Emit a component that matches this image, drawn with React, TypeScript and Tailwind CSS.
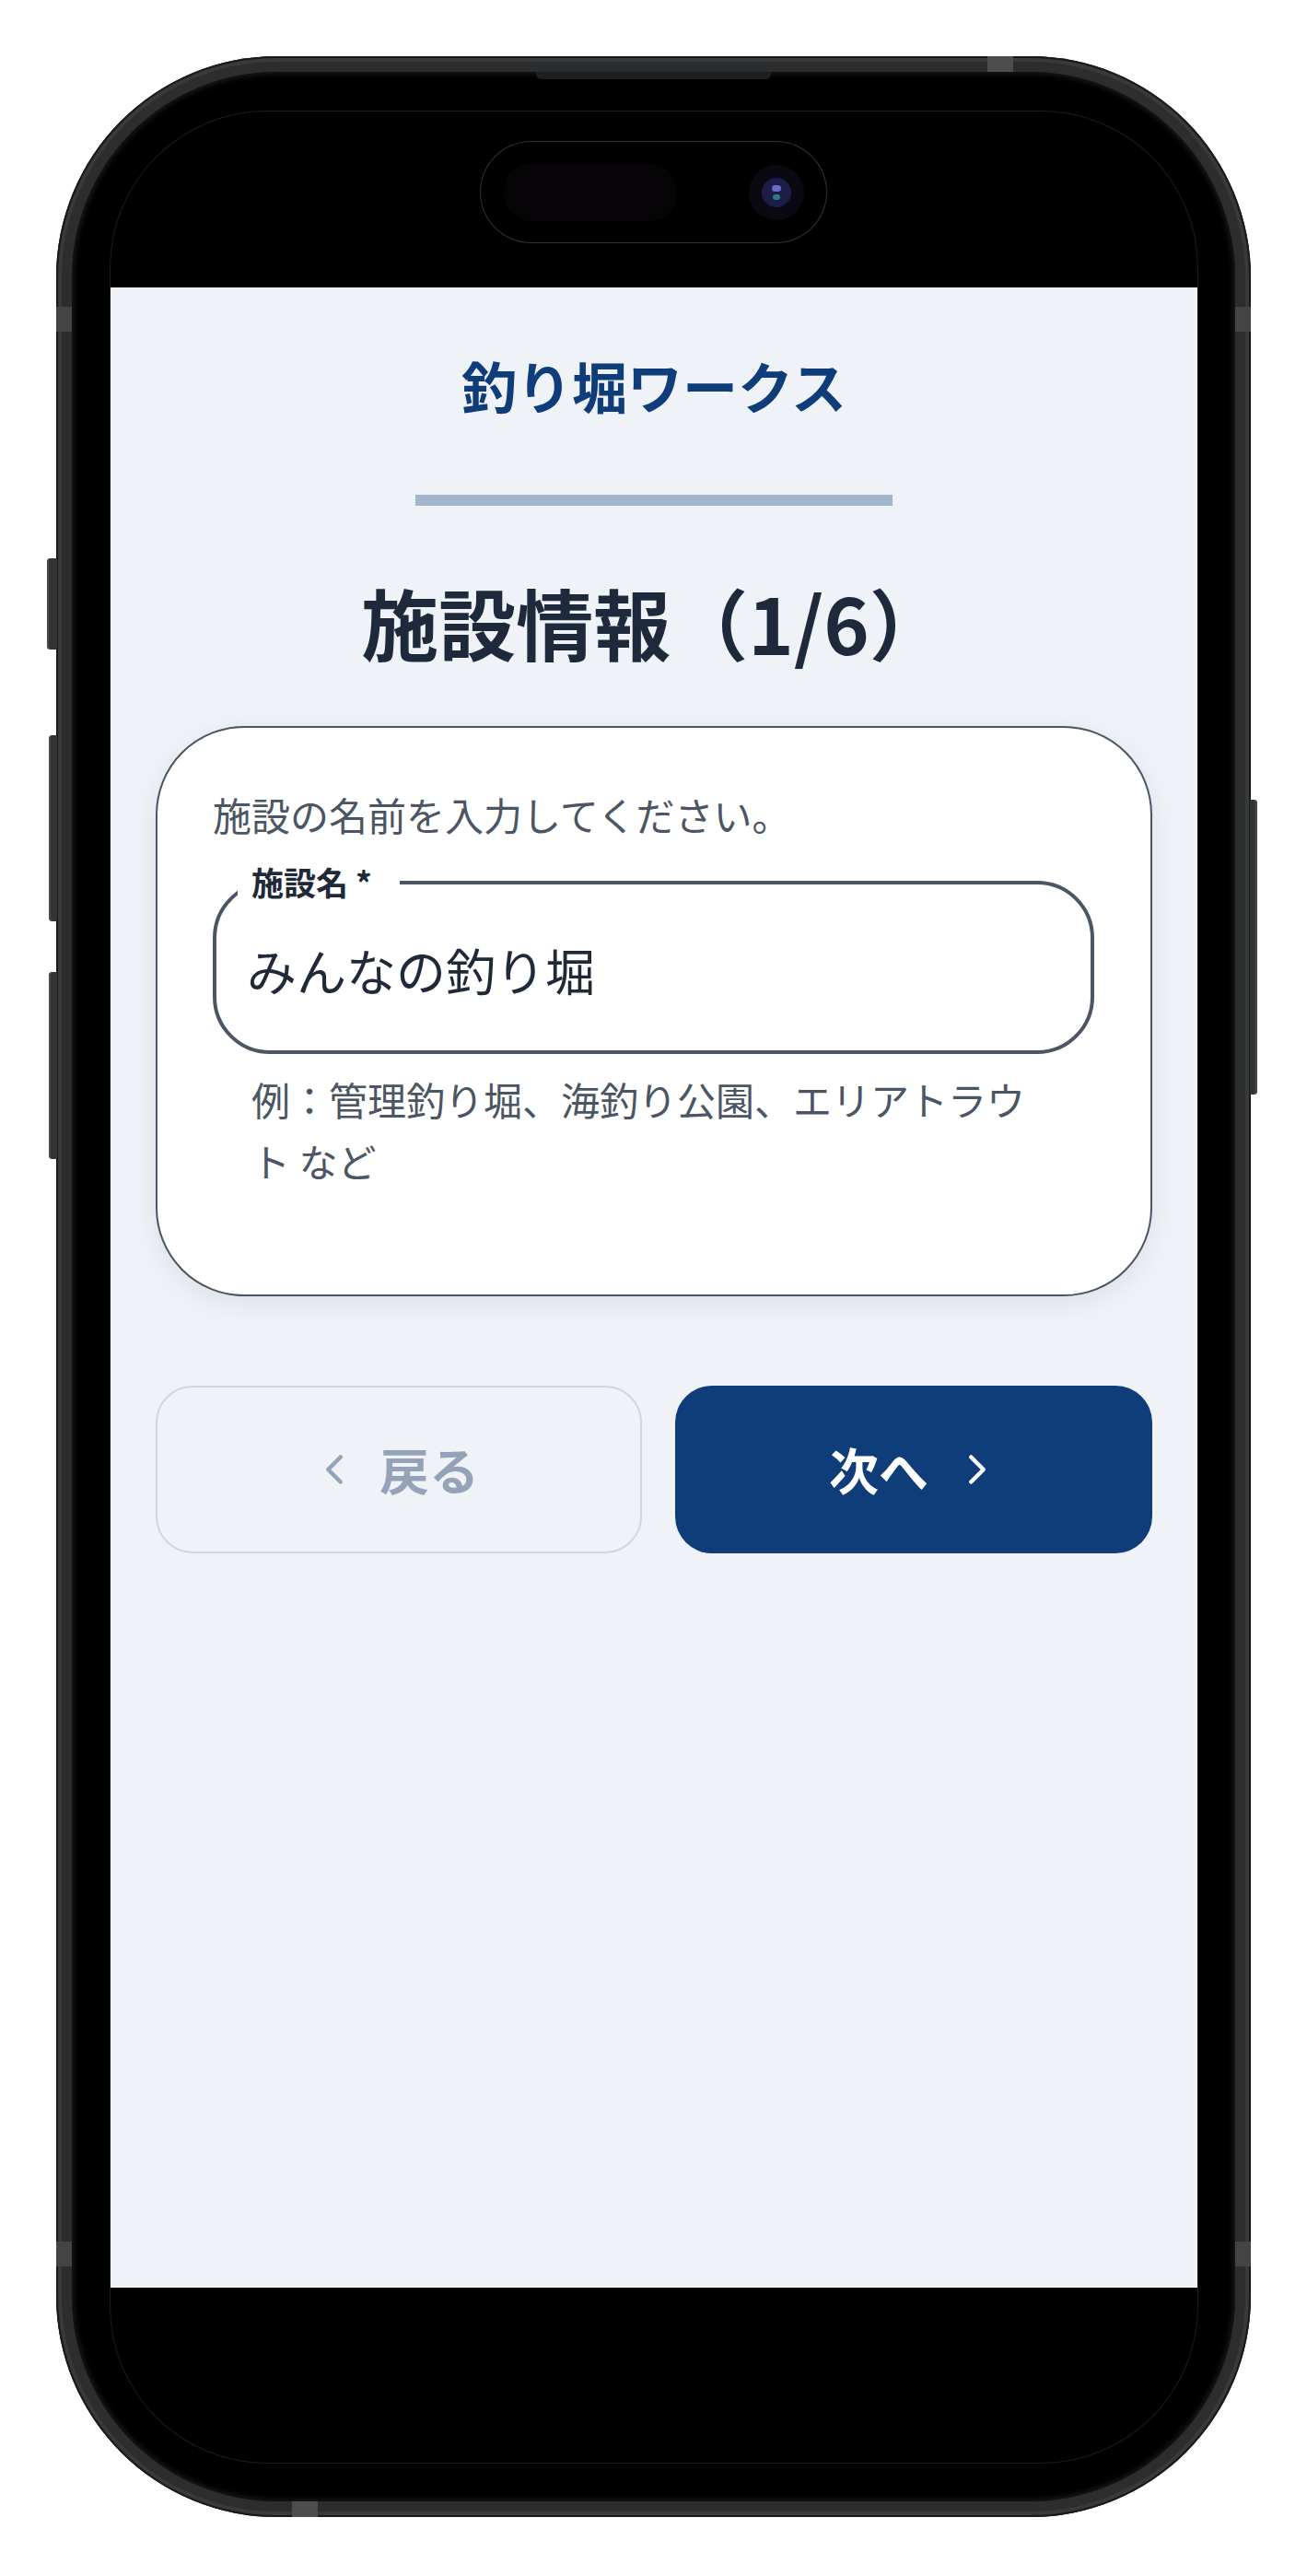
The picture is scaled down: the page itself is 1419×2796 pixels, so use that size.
import React from "react";

function ChevronLeft() {
  return (
    <svg width="54" height="54" viewBox="0 0 24 24" fill="none" stroke="currentColor" strokeWidth="2" strokeLinecap="round" strokeLinejoin="round">
      <path d="m15 18-6-6 6-6" />
    </svg>
  );
}

function ChevronRight() {
  return (
    <svg width="54" height="54" viewBox="0 0 24 24" fill="none" stroke="currentColor" strokeWidth="2" strokeLinecap="round" strokeLinejoin="round">
      <path d="m9 18 6-6-6-6" />
    </svg>
  );
}

export default function App() {
  return (
    <div className="w-[1419px] h-[2796px] bg-white pl-[61px] pt-[61px] font-['Noto_Sans_CJK_JP','Noto_Sans',sans-serif]">
      <div className="relative w-[1297px] h-[2671px]">
        {/* side buttons */}
        <div className="absolute left-[-10px] top-[545px] w-[11px] h-[99px] rounded-l-[4px] bg-[#323334] shadow-[inset_2px_0_0_#4a4a4a]" />
        <div className="absolute left-[-8px] top-[737px] w-[9px] h-[202px] rounded-l-[4px] bg-[#323334] shadow-[inset_2px_0_0_#4a4a4a]" />
        <div className="absolute left-[-8px] top-[994px] w-[9px] h-[203px] rounded-l-[4px] bg-[#323334] shadow-[inset_2px_0_0_#4a4a4a]" />
        <div className="absolute left-[1296px] top-[807px] w-[8px] h-[320px] rounded-r-[4px] bg-[#323334] shadow-[inset_-2px_0_0_#4a4a4a]" />

        {/* frame */}
        <div className="w-full h-full rounded-[240px] bg-[#2c2d2e] p-[17px] shadow-[inset_0_0_0_2px_#1a1a1a,inset_0_0_0_6px_#38393a]">
          <div className="w-full h-full rounded-[223px] bg-black pl-[42px] pr-[41px] pt-[43px] pb-[42px] shadow-[inset_0_0_6px_2px_#1c1c1c]">
            <div className="relative h-full rounded-[170px] ring-1 ring-[#1c1c1c] overflow-hidden flex flex-col bg-black">
              {/* dynamic island */}
              <div className="absolute left-[402px] top-[33px] w-[375px] h-[109px] rounded-full bg-black ring-1 ring-[#333333]">
                <div className="absolute left-[25px] top-[23px] w-[188px] h-[63px] rounded-[30px] bg-[#060407]" />
                <div className="absolute left-[291px] top-[25px] w-[60px] h-[60px] rounded-full bg-[#0a0810] flex items-center justify-center">
                  <div className="w-[32px] h-[32px] rounded-full bg-[#1b1d48] flex flex-col items-center justify-center gap-[3px]">
                    <div className="w-[10px] h-[7px] rounded-full bg-[#6a6cc8]" />
                    <div className="w-[8px] h-[6px] rounded-full bg-[#2f7a86]" />
                  </div>
                </div>
              </div>

              <div className="h-[191px] shrink-0" />

              <div className="flex-1 bg-[#eff3f8] flex flex-col items-center">
                <h1 className="mt-[76px] text-[60px] leading-[60px] font-bold text-[#0f3d7a]">釣り堀ワークス</h1>
                <div className="mt-[89px] w-[518px] h-[12px] bg-[#a3b5cc]" />
                <h2 className="mt-[84px] text-[84px] leading-[84px] font-bold text-[#1e293b]">施設情報（1/6）</h2>

                <div className="mt-[71px] self-stretch mx-[49px] rounded-[96px] border-2 border-[#4b5563] bg-white shadow-[0_8px_30px_rgba(15,23,42,0.08)] pl-[60px] pr-[61px] pt-[73px] pb-[112px]">
                  <p className="text-[42px] leading-[42px] text-[#4b5563]">施設の名前を入力してください。</p>

                  <div className="relative mt-[51px] h-[188px] rounded-[62px] border-4 border-[#4b5563] flex items-center pl-[33px] pt-[6px]">
                    <span className="absolute left-[23px] top-[-21px] pl-[15px] pr-[30px] bg-white text-[35px] leading-[36px] font-bold text-[#1f2937]">施設名 *</span>
                    <span className="text-[54px] leading-[54px] text-[#1f2937]">みんなの釣り堀</span>
                  </div>

                  <p className="mt-[15px] px-[42px] text-[42px] leading-[67px] text-[#4b5563]">例：管理釣り堀、海釣り公園、エリアトラウト など</p>
                </div>

                <div className="mt-[97px] self-stretch mx-[49px] flex gap-[36px]">
                  <div className="flex-1 h-[182px] rounded-[40px] border-2 border-[#cfd6e0] flex items-center justify-center gap-[22px] pr-[10px] text-[#94a3b8]">
                    <ChevronLeft />
                    <span className="text-[54px] leading-[54px] font-bold">戻る</span>
                  </div>
                  <div className="flex-1 h-[182px] rounded-[40px] bg-[#0f3d7a] flex items-center justify-center gap-[26px] pl-[4px] text-white">
                    <span className="text-[54px] leading-[54px] font-bold">次へ</span>
                    <ChevronRight />
                  </div>
                </div>
              </div>

              <div className="h-[190px] shrink-0" />
            </div>
          </div>
        </div>

        {/* speaker slit */}
        <div className="absolute left-[521px] top-[17px] w-[255px] h-[8px] rounded-b-[6px] bg-[#1e1f20]" />

        {/* antenna bands */}
        <div className="absolute left-[1011px] top-0 w-[28px] h-[17px] bg-[#4c4d4e]" />
        <div className="absolute left-0 top-[272px] w-[17px] h-[27px] bg-[#434445]" />
        <div className="absolute right-0 top-[272px] w-[17px] h-[27px] bg-[#434445]" />
        <div className="absolute left-[256px] bottom-0 w-[28px] h-[17px] bg-[#4c4d4e]" />
        <div className="absolute left-0 top-[2372px] w-[17px] h-[27px] bg-[#434445]" />
        <div className="absolute right-0 top-[2372px] w-[17px] h-[27px] bg-[#434445]" />
      </div>
    </div>
  );
}
